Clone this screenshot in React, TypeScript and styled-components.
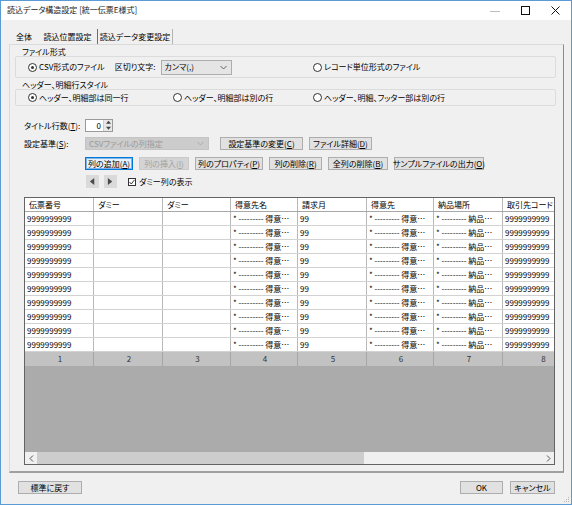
import React from "react";
import styled, { createGlobalStyle, css } from "styled-components";

const GlobalStyle = createGlobalStyle`
  * { box-sizing: border-box; }
  html, body { margin: 0; padding: 0; background: #ffffff; }
  body {
    font-family: "Noto Sans CJK JP", "Noto Sans", sans-serif;
    font-size: 8px;
    font-feature-settings: "palt";
    color: #000000;
  }
`;

const Window = styled.div`
  position: relative;
  width: 572px;
  height: 505px;
  border: 1px solid #5b9bd5;
  background: #f0f0f0;
  display: flex;
  flex-direction: column;
  overflow: hidden;
`;

const TitleBar = styled.div`
  flex: none;
  height: 19px;
  background: #ffffff;
  display: flex;
  align-items: center;
  padding-left: 6px;
`;

const TitleText = styled.span`
  flex: 1;
  line-height: 10px;
  margin-top: -2px;
  color: #222222;
`;

const CaptionButtons = styled.div`
  display: flex;
  height: 100%;
  margin-right: 1px;
`;

const CaptionButton = styled.div`
  width: 30px;
  height: 100%;
  display: flex;
  align-items: center;
  justify-content: center;
`;

const Body = styled.div`
  flex: 1;
  display: flex;
  flex-direction: column;
  padding: 9px 7px 0 8px;
`;

const TabStrip = styled.div`
  display: flex;
  height: 15px;
  padding-left: 1px;
`;

const Tab = styled.div<{ $w: number; $boxed?: boolean }>`
  width: ${(p) => p.$w}px;
  height: 15px;
  display: flex;
  align-items: center;
  justify-content: center;
  line-height: 10px;
  ${(p) =>
    p.$boxed &&
    css`
      border-left: 1px solid #6d6d6d;
      border-right: 1px solid #b4b4b4;
    `}
`;

const Panel = styled.div`
  display: flex;
  flex-direction: column;
  border: 1px solid #dadada;
  border-right-color: #8c8c8c;
  border-bottom: 2px solid #a0a0a0;
  padding: 0 7px 6px 5px;
`;

const GroupLabel = styled.div<{ $mt: number }>`
  margin-top: ${(p) => p.$mt}px;
  padding-left: 7px;
  height: 9px;
  line-height: 9px;
`;

const GroupBox = styled.div<{ $h: number; $cols: string }>`
  height: ${(p) => p.$h}px;
  border: 1px solid #dcdcdc;
  border-radius: 2px;
  display: grid;
  grid-template-columns: ${(p) => p.$cols};
  align-items: center;
  padding-left: 12px;
`;

const Inline = styled.div`
  display: flex;
  align-items: center;
`;

const RadioItem = styled.label`
  display: flex;
  align-items: center;
  gap: 2px;
  line-height: 10px;
  white-space: nowrap;
`;

const RadioCircle = styled.span<{ $on?: boolean }>`
  width: 9px;
  height: 9px;
  border-radius: 50%;
  border: 1px solid #333333;
  background: #ffffff;
  display: flex;
  align-items: center;
  justify-content: center;
  &::after {
    content: "";
    width: 3px;
    height: 3px;
    border-radius: 50%;
    background: ${(p) => (p.$on ? "#333333" : "transparent")};
  }
`;

const FieldText = styled.span<{ $ml?: number }>`
  margin-left: ${(p) => p.$ml ?? 0}px;
  line-height: 10px;
  white-space: nowrap;
`;

const Select = styled.div<{ $w: number; $disabled?: boolean; $ml?: number }>`
  width: ${(p) => p.$w}px;
  height: ${(p) => (p.$disabled ? 13 : 15)}px;
  margin-left: ${(p) => p.$ml ?? 0}px;
  border: 1px solid ${(p) => (p.$disabled ? "#c4c4c4" : "#adadad")};
  background: ${(p) => (p.$disabled ? "#cccccc" : "#e5e5e5")};
  color: ${(p) => (p.$disabled ? "#9a9a9a" : "#000000")};
  display: flex;
  align-items: center;
  justify-content: space-between;
  padding: 0 4px 0 3px;
  line-height: 10px;
`;

const FormRow = styled.div<{ $mt: number }>`
  margin-top: ${(p) => p.$mt}px;
  height: 13px;
  display: flex;
  align-items: center;
  padding-left: 9px;
`;

const FieldLabel = styled.span`
  width: 61px;
  line-height: 10px;
  white-space: nowrap;
`;

const Spinner = styled.div`
  width: 28px;
  height: 13px;
  background: #ffffff;
  border: 1px solid #9a9a9a;
  display: flex;
  align-items: stretch;
`;

const SpinValue = styled.span`
  flex: 1;
  text-align: right;
  padding-right: 2px;
  line-height: 11px;
`;

const SpinArrows = styled.div`
  width: 9px;
  display: flex;
  flex-direction: column;
  background: #e8e8e8;
  border-left: 1px solid #cfcfcf;
`;

const SpinHalf = styled.div`
  flex: 1;
  display: flex;
  align-items: center;
  justify-content: center;
`;

const ButtonRow = styled.div<{ $mt: number; $pl: number; $gap: number }>`
  margin-top: ${(p) => p.$mt}px;
  height: 13px;
  display: flex;
  align-items: center;
  gap: ${(p) => p.$gap}px;
  padding-left: ${(p) => p.$pl}px;
`;

const Btn = styled.div<{ $w: number; $focus?: boolean; $disabled?: boolean; $ml?: number }>`
  width: ${(p) => p.$w}px;
  height: 13px;
  margin-left: ${(p) => p.$ml ?? 0}px;
  border: 1px solid #adadad;
  background: #e1e1e1;
  display: flex;
  align-items: center;
  justify-content: center;
  line-height: 10px;
  white-space: nowrap;
  ${(p) =>
    p.$focus &&
    css`
      border-color: #0078d7;
      background: #e5f1fb;
      box-shadow: inset 0 0 0 1px #7eb4ea;
    `}
  ${(p) =>
    p.$disabled &&
    css`
      border-color: #c9c9c9;
      background: #d4d4d4;
      color: #a2a2a2;
    `}
`;

const ArrowBtn = styled.div`
  width: 13px;
  height: 13px;
  background: #dadada;
  display: flex;
  align-items: center;
  justify-content: center;
`;

const CheckItem = styled.label`
  display: flex;
  align-items: center;
  gap: 3px;
  margin-left: 6px;
  line-height: 10px;
`;

const CheckBox = styled.span`
  width: 8px;
  height: 8px;
  border: 1px solid #333333;
  background: #ffffff;
  display: flex;
  align-items: center;
  justify-content: center;
`;

const Mn = styled.span`
  text-decoration: underline;
`;

const GridBox = styled.div`
  margin: 9px 0 0 9px;
  width: 531px;
  height: 268px;
  border: 1px solid #646464;
  background: #ababab;
  display: flex;
  flex-direction: column;
  overflow: hidden;
`;

const COLS = "69px 69px 68px 67px 69px 67px 69px 80px";

type Kind = "head" | "data" | "index";

const GridRow = styled.div<{ $kind: Kind }>`
  flex: none;
  display: grid;
  grid-template-columns: ${COLS};
  height: 14px;
  background: ${(p) => (p.$kind === "index" ? "#c2c2c2" : "#ffffff")};
  border-bottom: ${(p) =>
    p.$kind === "index" ? "none" : `1px solid ${p.$kind === "head" ? "#a8a8a8" : "#d2d2d2"}`};
`;

const Cell = styled.div<{ $kind: Kind }>`
  overflow: hidden;
  white-space: nowrap;
  line-height: 13px;
  border-right: 1px solid ${(p) => (p.$kind === "index" ? "#a6a6a6" : "#b8b8b8")};
  padding-left: ${(p) => (p.$kind === "head" ? 4 : 2)}px;
  text-align: ${(p) => (p.$kind === "index" ? "center" : "left")};
  color: ${(p) => (p.$kind === "index" ? "#333333" : "#000000")};
`;

const Filler = styled.div`
  flex: 1;
`;

const HScroll = styled.div`
  flex: none;
  height: 12px;
  display: flex;
  background: #f0f0f0;
`;

const ScrollArrow = styled.div`
  width: 12px;
  display: flex;
  align-items: center;
  justify-content: center;
`;

const ScrollThumb = styled.div<{ $w: number }>`
  width: ${(p) => p.$w}px;
  background: #cdcdcd;
`;

const Footer = styled.div`
  display: flex;
  align-items: center;
  gap: 7px;
  padding: 8px 9px 0 9px;
`;

const Spacer = styled.div`
  flex: 1;
`;

const Grip = styled.svg`
  position: absolute;
  right: 1px;
  bottom: 1px;
`;

const headers = ["伝票番号", "ダミー", "ダミー", "得意先名", "請求月", "得意先", "納品場所", "取引先コード"];
const dataRow = [
  "9999999999",
  "",
  "",
  "* --------- 得意…",
  "99",
  "* --------- 得意…",
  "* --------- 納品…",
  "9999999999",
];

const Tri = ({ dir, color = "#555555", size = 6 }: { dir: "l" | "r" | "u" | "d"; color?: string; size?: number }) => {
  const pts = {
    l: "6,0 6,8 1,4",
    r: "1,0 1,8 6,4",
    u: "0,6 8,6 4,1",
    d: "0,1 8,1 4,6",
  }[dir];
  return (
    <svg width={size} height={size} viewBox="0 0 8 8">
      <polygon points={pts} fill={color} />
    </svg>
  );
};

const Chevron = ({ color = "#555555" }: { color?: string }) => (
  <svg width="7" height="5" viewBox="0 0 7 5">
    <polyline points="0.5,1 3.5,4 6.5,1" fill="none" stroke={color} strokeWidth="0.9" />
  </svg>
);

export default function App() {
  return (
    <>
      <GlobalStyle />
      <Window>
        <TitleBar>
          <TitleText>読込データ構造設定 [統一伝票E様式]</TitleText>
          <CaptionButtons>
            <CaptionButton>
              <svg width="10" height="10" viewBox="0 0 10 10">
                <line x1="0" y1="5.5" x2="10" y2="5.5" stroke="#bdbdbd" strokeWidth="1" />
              </svg>
            </CaptionButton>
            <CaptionButton>
              <svg width="9" height="9" viewBox="0 0 9 9">
                <rect x="0.5" y="0.5" width="8" height="8" fill="none" stroke="#111111" strokeWidth="1" />
              </svg>
            </CaptionButton>
            <CaptionButton>
              <svg width="9" height="9" viewBox="0 0 9 9">
                <path d="M0.5 0.5 L8.5 8.5 M8.5 0.5 L0.5 8.5" stroke="#111111" strokeWidth="1" />
              </svg>
            </CaptionButton>
          </CaptionButtons>
        </TitleBar>

        <Body>
          <TabStrip>
            <Tab $w={28}>全体</Tab>
            <Tab $w={59}>読込位置設定</Tab>
            <Tab $w={76} $boxed>
              読込データ変更設定
            </Tab>
          </TabStrip>

          <Panel>
            <GroupLabel $mt={2}>ファイル形式</GroupLabel>
            <GroupBox $h={22} $cols="285px auto">
              <Inline>
                <RadioItem>
                  <RadioCircle $on />
                  CSV形式のファイル
                </RadioItem>
                <FieldText $ml={10}>区切り文字:</FieldText>
                <Select $w={71} $ml={5}>
                  <span>カンマ(,)</span>
                  <Chevron />
                </Select>
              </Inline>
              <RadioItem>
                <RadioCircle />
                レコード単位形式のファイル
              </RadioItem>
            </GroupBox>

            <GroupLabel $mt={2}>ヘッダー、明細行スタイル</GroupLabel>
            <GroupBox $h={17} $cols="145px 140px auto">
              <RadioItem>
                <RadioCircle $on />
                ヘッダー、明細部は同一行
              </RadioItem>
              <RadioItem>
                <RadioCircle />
                ヘッダー、明細部は別の行
              </RadioItem>
              <RadioItem>
                <RadioCircle />
                ヘッダー、明細、フッター部は別の行
              </RadioItem>
            </GroupBox>

            <FormRow $mt={13}>
              <FieldLabel>
                タイトル行数(<Mn>T</Mn>):
              </FieldLabel>
              <Spinner>
                <SpinValue>0</SpinValue>
                <SpinArrows>
                  <SpinHalf>
                    <Tri dir="u" size={5} color="#444444" />
                  </SpinHalf>
                  <SpinHalf>
                    <Tri dir="d" size={5} color="#444444" />
                  </SpinHalf>
                </SpinArrows>
              </Spinner>
            </FormRow>

            <FormRow $mt={5}>
              <FieldLabel>
                設定基準(<Mn>S</Mn>):
              </FieldLabel>
              <Select $w={124} $disabled>
                <span>CSVファイルの列指定</span>
                <Chevron color="#a8a8a8" />
              </Select>
              <Btn $w={83} $ml={11}>
                設定基準の変更(<Mn>C</Mn>)
              </Btn>
              <Btn $w={63} $ml={6}>
                ファイル詳細(<Mn>D</Mn>)
              </Btn>
            </FormRow>

            <ButtonRow $mt={7} $pl={70} $gap={6}>
              <Btn $w={48} $focus>
                列の追加(<Mn>A</Mn>)
              </Btn>
              <Btn $w={50} $disabled>
                列の挿入(<Mn>I</Mn>)
              </Btn>
              <Btn $w={68}>
                列のプロパティ(<Mn>P</Mn>)
              </Btn>
              <Btn $w={53}>
                列の削除(<Mn>R</Mn>)
              </Btn>
              <Btn $w={60}>
                全列の削除(<Mn>B</Mn>)
              </Btn>
              <Btn $w={90}>
                サンプルファイルの出力(<Mn>O</Mn>)
              </Btn>
            </ButtonRow>

            <ButtonRow $mt={5} $pl={71} $gap={5}>
              <ArrowBtn>
                <Tri dir="l" size={7} color="#4a4a4a" />
              </ArrowBtn>
              <ArrowBtn>
                <Tri dir="r" size={7} color="#4a4a4a" />
              </ArrowBtn>
              <CheckItem>
                <CheckBox>
                  <svg width="6" height="6" viewBox="0 0 6 6">
                    <polyline points="0.5,3 2.3,5 5.5,0.8" fill="none" stroke="#222222" strokeWidth="0.9" />
                  </svg>
                </CheckBox>
                ダミー列の表示
              </CheckItem>
            </ButtonRow>

            <GridBox>
              <GridRow $kind="head">
                {headers.map((h, i) => (
                  <Cell key={i} $kind="head">
                    {h}
                  </Cell>
                ))}
              </GridRow>
              {Array.from({ length: 10 }).map((_, r) => (
                <GridRow key={r} $kind="data">
                  {dataRow.map((v, i) => (
                    <Cell key={i} $kind="data">
                      {v}
                    </Cell>
                  ))}
                </GridRow>
              ))}
              <GridRow $kind="index">
                {headers.map((_, i) => (
                  <Cell key={i} $kind="index">
                    {i + 1}
                  </Cell>
                ))}
              </GridRow>
              <Filler />
              <HScroll>
                <ScrollArrow>
                  <svg width="5" height="7" viewBox="0 0 5 7">
                    <polyline points="4,0.5 1,3.5 4,6.5" fill="none" stroke="#555555" strokeWidth="1" />
                  </svg>
                </ScrollArrow>
                <ScrollThumb $w={327} />
                <Spacer />
                <ScrollArrow>
                  <svg width="5" height="7" viewBox="0 0 5 7">
                    <polyline points="1,0.5 4,3.5 1,6.5" fill="none" stroke="#555555" strokeWidth="1" />
                  </svg>
                </ScrollArrow>
              </HScroll>
            </GridBox>
          </Panel>

          <Footer>
            <Btn $w={64}>標準に戻す</Btn>
            <Spacer />
            <Btn $w={43}>OK</Btn>
            <Btn $w={45}>キャンセル</Btn>
          </Footer>
        </Body>

        <Grip width="8" height="8" viewBox="0 0 8 8">
          {[
            [6, 2],
            [6, 4],
            [4, 4],
            [6, 6],
            [4, 6],
            [2, 6],
          ].map(([x, y], i) => (
            <rect key={i} x={x} y={y} width="1" height="1" fill="#b5b5b5" />
          ))}
        </Grip>
      </Window>
    </>
  );
}
